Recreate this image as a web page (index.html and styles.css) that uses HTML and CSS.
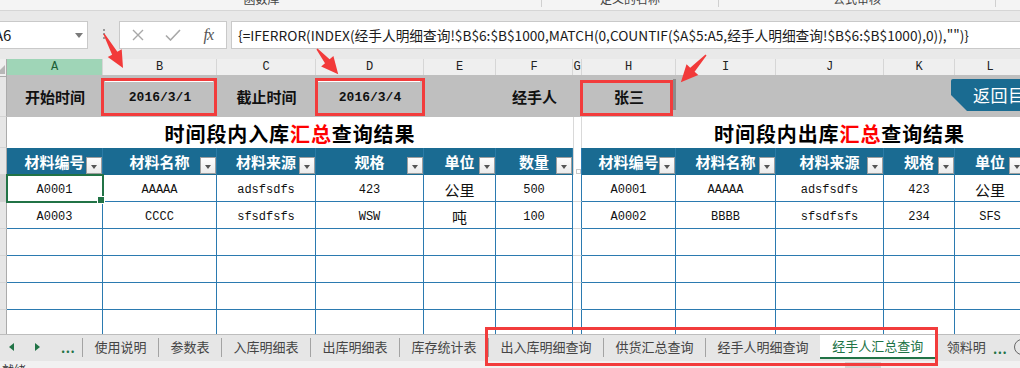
FILE: index.html
```html
<!DOCTYPE html>
<html lang="zh-CN">
<head>
<meta charset="utf-8">
<title>经手人汇总查询</title>
<link rel="stylesheet" href="styles.css">
</head>
<body>
<div class="app">
  <div class="ribbon">
    <div class="grp g1"><span>函数库</span></div>
    <div class="grp g2"><span>定义的名称</span></div>
    <div class="grp g3"><span>公式审核</span></div>
    <div class="grp g4"></div>
  </div>

  <div class="fbar">
    <div class="namebox"><span class="nb-text">A6</span><span class="nb-drop"></span></div>
    <div class="dots"><i></i><i></i><i></i></div>
    <div class="fbtns">
      <span class="fbtn"><svg width="12" height="12" viewBox="0 0 12 12"><path d="M1 1L11 11M11 1L1 11" stroke="#a8a8a8" stroke-width="1.4" fill="none"/></svg></span>
      <span class="fbtn"><svg width="16" height="12" viewBox="0 0 16 12"><path d="M1 6.5L5.5 11L15 1" stroke="#a8a8a8" stroke-width="1.6" fill="none"/></svg></span>
      <span class="fbtn fx">fx</span>
    </div>
    <div class="formula">{=IFERROR(INDEX(经手人明细查询!$B$6:$B$1000,MATCH(0,COUNTIF($A$5:A5,经手人明细查询!$B$6:$B$1000),0)),"")}</div>
  </div>

  <div class="sheet">
    <div class="row colhdr">
      <div class="rh corner"></div>
      <div class="ch sel">A</div><div class="ch">B</div><div class="ch">C</div><div class="ch">D</div><div class="ch">E</div><div class="ch">F</div><div class="ch">G</div><div class="ch">H</div><div class="ch">I</div><div class="ch">J</div><div class="ch">K</div><div class="ch">L</div><div class="ch">M</div>
    </div>

    <div class="row params">
      <div class="rh"></div>
      <div class="pc">开始时间</div>
      <div class="pc pv pb"><span class="date">2016/3/1</span></div>
      <div class="pc">截止时间</div>
      <div class="pc pv pd"><span class="date">2016/3/4</span></div>
      <div class="pc"></div>
      <div class="pc">经手人</div>
      <div class="pc pg"></div>
      <div class="pc pv ph">张三</div>
      <div class="pc"></div><div class="pc"></div><div class="pc"></div><div class="pc"></div><div class="pc"></div>
    </div>

    <div class="row titles">
      <div class="rh"></div>
      <div class="title tl">时间段内入库<span class="hl">汇总</span>查询结果</div>
      <div class="tg"></div>
      <div class="title tr">时间段内出库<span class="hl">汇总</span>查询结果</div>
    </div>

    <div class="row heads">
      <div class="rh"></div>
      <div class="hc">材料编号<span class="fb"></span></div>
      <div class="hc">材料名称<span class="fb"></span></div>
      <div class="hc">材料来源<span class="fb"></span></div>
      <div class="hc">规格<span class="fb"></span></div>
      <div class="hc">单位<span class="fb"></span></div>
      <div class="hc">数量<span class="fb"></span></div>
      <div class="hg"><span class="tiny"></span></div>
      <div class="hc">材料编号<span class="fb"></span></div>
      <div class="hc">材料名称<span class="fb"></span></div>
      <div class="hc">材料来源<span class="fb"></span></div>
      <div class="hc">规格<span class="fb"></span></div>
      <div class="hc">单位<span class="fb"></span></div>
      <div class="hc">数量<span class="fb"></span></div>
    </div>

    <div class="row data">
      <div class="rh on"></div>
      <div class="dc sel">A0001</div><div class="dc">AAAAA</div><div class="dc">adsfsdfs</div><div class="dc">423</div><div class="dc cj">公里</div><div class="dc">500</div>
      <div class="dg"></div>
      <div class="dc">A0001</div><div class="dc">AAAAA</div><div class="dc">adsfsdfs</div><div class="dc">423</div><div class="dc cj">公里</div><div class="dc"></div>
    </div>
    <div class="row data">
      <div class="rh"></div>
      <div class="dc">A0003</div><div class="dc">CCCC</div><div class="dc">sfsdfsfs</div><div class="dc">WSW</div><div class="dc cj">吨</div><div class="dc">100</div>
      <div class="dg"></div>
      <div class="dc">A0002</div><div class="dc">BBBB</div><div class="dc">sfsdfsfs</div><div class="dc">234</div><div class="dc">SFS</div><div class="dc"></div>
    </div>
    <div class="row data">
      <div class="rh"></div>
      <div class="dc"></div><div class="dc"></div><div class="dc"></div><div class="dc"></div><div class="dc"></div><div class="dc"></div>
      <div class="dg"></div>
      <div class="dc"></div><div class="dc"></div><div class="dc"></div><div class="dc"></div><div class="dc"></div><div class="dc"></div>
    </div>
    <div class="row data">
      <div class="rh"></div>
      <div class="dc"></div><div class="dc"></div><div class="dc"></div><div class="dc"></div><div class="dc"></div><div class="dc"></div>
      <div class="dg"></div>
      <div class="dc"></div><div class="dc"></div><div class="dc"></div><div class="dc"></div><div class="dc"></div><div class="dc"></div>
    </div>
    <div class="row data">
      <div class="rh"></div>
      <div class="dc"></div><div class="dc"></div><div class="dc"></div><div class="dc"></div><div class="dc"></div><div class="dc"></div>
      <div class="dg"></div>
      <div class="dc"></div><div class="dc"></div><div class="dc"></div><div class="dc"></div><div class="dc"></div><div class="dc"></div>
    </div>
    <div class="row data">
      <div class="rh"></div>
      <div class="dc"></div><div class="dc"></div><div class="dc"></div><div class="dc"></div><div class="dc"></div><div class="dc"></div>
      <div class="dg"></div>
      <div class="dc"></div><div class="dc"></div><div class="dc"></div><div class="dc"></div><div class="dc"></div><div class="dc"></div>
    </div>
  </div>

  <div class="tabs">
    <div class="nav"><span class="tri-l"></span><span class="tri-r"></span><span class="more">...</span></div>
    <div class="strip">
      <span class="sep"></span><span class="tab">使用说明</span>
      <span class="sep"></span><span class="tab">参数表</span>
      <span class="sep"></span><span class="tab">入库明细表</span>
      <span class="sep"></span><span class="tab">出库明细表</span>
      <span class="sep"></span><span class="tab">库存统计表</span>
      <span class="sep"></span><span class="tab">出入库明细查询</span>
      <span class="sep"></span><span class="tab">供货汇总查询</span>
      <span class="sep"></span><span class="tab">经手人明细查询</span>
      <span class="tab on">经手人汇总查询</span>
      <span class="tab last">领料明</span>
    </div>
    <span class="more more2">...</span>
    <span class="addsheet"></span>
  </div>

  <div class="status">
    <span class="st-text">就绪</span>
    <span class="st-view"></span>
  </div>

  <div class="back">返回目录</div>
  <div class="tabmark"></div>

  <svg class="arrows" width="1020" height="368" viewBox="0 0 1020 368">
    <polygon transform="translate(104,34) rotate(60.8)" points="0,-0.7 22,-3 22,-8 39,0 22,8 22,3 0,0.7" fill="#f23a3a"/>
    <polygon transform="translate(317,49) rotate(50)" points="0,-0.7 16,-3 16,-8 33,0 16,8 16,3 0,0.7" fill="#f23a3a"/>
    <polygon transform="translate(706,55) rotate(132.8)" points="0,-0.7 20,-3 20,-8 37,0 20,8 20,3 0,0.7" fill="#f23a3a"/>
  </svg>
</div>
</body>
</html>
```

FILE: styles.css
```css
* { box-sizing: border-box; margin: 0; padding: 0; }
html, body { width: 1020px; height: 368px; overflow: hidden; background: #e9e9e9; }
body { font-family: "Noto Sans CJK SC", "Noto Sans", sans-serif; }

.app {
  width: 1020px; height: 368px; overflow: hidden; position: relative;
  display: flex; flex-direction: column;
}

/* ribbon remnant */
.ribbon {
  height: 11px; flex: none; display: flex; overflow: hidden;
  background: #f4f4f4; border-bottom: 1px solid #d6d6d6;
}
.grp { height: 7px; overflow: hidden; border-right: 1px solid #d0d0d0; flex: none; }
.grp span { display: block; text-align: center; font-size: 12px; line-height: 14px; margin-top: -8px; color: #444; }
.g1 { width: 542px; padding-right: 18px; }
.g2 { width: 177px; }
.g3 { width: 277px; }
.g4 { flex: 1; border-right: none; }

/* formula bar */
.fbar {
  height: 48px; flex: none; display: flex; padding: 10px 0;
  background: #e9e9e9;
}
.namebox {
  width: 89px; margin-left: -1px; flex: none; background: #fff;
  border: 1px solid #c9c9c9; display: flex; align-items: center; position: relative; overflow: hidden;
}
.nb-text { font-size: 15px; color: #222; margin-left: -6px; line-height: 26px; }
.nb-drop {
  position: absolute; left: 75px; top: 11px;
  border-left: 4px solid transparent; border-right: 4px solid transparent; border-top: 5px solid #7a7a7a;
}
.dots { width: 31px; flex: none; display: flex; flex-direction: column; align-items: center; padding-top: 8px; gap: 2px; }
.dots i { display: block; width: 2px; height: 2px; background: #9a9a9a; }
.fbtns {
  width: 108px; flex: none; background: #fff; border: 1px solid #c9c9c9;
  display: flex; align-items: center;
}
.fbtn { width: 36px; display: flex; justify-content: center; align-items: center; height: 100%; }
.fx { font-family: "Liberation Serif", serif; font-style: italic; font-size: 16px; color: #555; letter-spacing: -1px; }
.formula {
  width: 800px; flex: none; margin-left: 4px; background: #fff; border: 1px solid #c9c9c9;
  padding-left: 6px; font-size: 13.7px; line-height: 26px; color: #1a1a1a; white-space: nowrap; overflow: hidden;
}

/* sheet */
.sheet { height: 275px; flex: none; overflow: hidden; background: #fff; position: relative; }
.row {
  display: grid; width: 1098px;
  grid-template-columns: 7px 96px 114px 99px 108px 72px 77px 9px 94px 100px 108px 71px 71px 71px;
}
.rh { background: #e6e6e6; border-right: 1px solid #ababab; border-bottom: 1px solid #d4d4d4; }
.rh.on { background: #d2d2d2; }

.colhdr { height: 16px; background: #efefef; }
.corner { position: relative; background: #efefef; border-bottom: 1px solid #ababab; }
.corner::after {
  content: ""; position: absolute; right: 1px; bottom: 2px;
  border-left: 9px solid transparent; border-bottom: 9px solid #b7b7b7;
}
.ch {
  border-right: 1px solid #d6d6d6; border-bottom: 1px solid #ababab;
  font-family: "Liberation Mono", monospace; font-size: 12px; line-height: 16px;
  text-align: center; color: #222;
}
.ch.sel { background: #9fd5b7; border-bottom: 2px solid #217346; color: #1c5e36; }

.params { height: 42px; }
.pc {
  background: #bfbfbf; display: flex; align-items: center; justify-content: center;
  font-size: 15px; font-weight: 700; color: #111;
}
.pv { position: relative; }
.pv::after { content: ""; position: absolute; border: 3px solid #f23c3c; }
.pv::before { content: ""; position: absolute; }
.pb::after { left: -2px; right: 0; top: 3px; height: 32px; }
.pd::after { left: -1px; right: -1px; top: 3px; height: 32px; }
.pb::before, .pd::before { left: 2px; right: 4px; top: 6px; height: 1px; background: #fff; }
.ph::after { left: -2px; right: 3px; top: 5px; height: 30px; }
.ph::before { right: 0; top: 4px; width: 3px; height: 31px; background: #8c8c8c; }
.date { font-family: "Liberation Mono", monospace; font-size: 13px; font-weight: 700; padding-top: 2px; }

.titles { height: 31px; }
.title {
  display: flex; align-items: center; justify-content: center;
  font-size: 20px; font-weight: 700; letter-spacing: 0.9px; color: #000; padding-top: 2px;
}
.tl { grid-column: 2 / 8; }
.tr { grid-column: 9 / 15; }
.tg { border-left: 1px solid #d9d9d9; border-right: 1px solid #d9d9d9; }
.hl { color: #ff0000; }

.heads { height: 27px; }
.hc {
  position: relative; background: #1a6b92; color: #fff; font-size: 15px; font-weight: 700;
  display: flex; align-items: center; justify-content: center; border-right: 1px solid #2b7ba6;
}
.hg { background: #fff; border-left: 1px solid #d6d6d6; border-right: 1px solid #2b7ab0; position: relative; }
.tiny { position: absolute; left: 2px; bottom: 1px; width: 5px; height: 5px; border: 1px solid #c8c8c8; background: #fff; }
.fb {
  position: absolute; right: 0; bottom: 1px; width: 16px; height: 17px;
  background: linear-gradient(#fefefe, #ebebeb); border: 1px solid #9e9e9e;
}
.fb::after {
  content: ""; position: absolute; left: 4px; top: 7px;
  border-left: 3.5px solid transparent; border-right: 3.5px solid transparent; border-top: 4px solid #555;
}

.data { height: 27px; }
.dc {
  border-right: 1px solid #2b7ab0; border-bottom: 1px solid #2b7ab0;
  display: flex; align-items: center; justify-content: center; padding-top: 3px;
  font-family: "Liberation Mono", monospace; font-size: 12px; color: #111;
}
.dc.cj { font-family: "Noto Sans CJK SC", sans-serif; font-size: 15px; padding-top: 2px; }
.dg { border-right: 1px solid #2b7ab0; border-bottom: 1px solid #d9d9d9; }
.dc.sel { position: relative; z-index: 2; }
.dc.sel::after {
  content: ""; position: absolute; left: -1px; top: -1px; right: -2px; bottom: -2px;
  border: 2px solid #217346;
}
.dc.sel::before {
  content: ""; position: absolute; right: -3px; bottom: -3px; width: 6px; height: 6px;
  background: #217346; border: 1px solid #fff; z-index: 3;
}

/* sheet tabs */
.tabs {
  height: 27px; flex: none; display: flex; align-items: flex-start;
  background: #e6e6e6; border-top: 1px solid #bdbdbd; font-size: 13px; color: #444;
}
.nav { width: 82px; flex: none; height: 24px; display: flex; align-items: center; }
.tri-l {
  margin-left: 9px; width: 0; height: 0;
  border-top: 4px solid transparent; border-bottom: 4px solid transparent; border-right: 5px solid #217346;
}
.tri-r {
  margin-left: 21px; width: 0; height: 0;
  border-top: 4px solid transparent; border-bottom: 4px solid transparent; border-left: 5px solid #217346;
}
.more { margin-left: 21px; color: #217346; font-weight: 700; font-size: 13px; line-height: 24px; padding-top: 2px; letter-spacing: 0.5px; }
.strip { width: 906px; flex: none; display: flex; align-items: flex-start; overflow: hidden; white-space: nowrap; }
.sep { width: 1px; height: 19px; margin-top: 3px; background: #a3a3a3; flex: none; }
.tab { flex: none; height: 24px; line-height: 23px; padding: 0 11.5px; }
.tab.on { background: #fff; color: #217346; border-bottom: 2px solid #217346; line-height: 22px; padding: 0 12px; }
.tab.last { padding-right: 0; }
.more2 { margin-left: 5px; }
.addsheet {
  margin-left: 7px; margin-top: 4px; width: 16px; height: 16px; flex: none;
  border: 1px solid #666; border-radius: 50%;
}

.status { flex: 1; background: #f1f1f1; position: relative; overflow: hidden; }
.st-text { position: absolute; left: 2px; top: 2px; font-size: 12px; line-height: 14px; color: #333; }
.st-view { position: absolute; left: 845px; top: 1px; width: 36px; height: 10px; background: #d4d4d4; }

/* overlays */
.back {
  position: absolute; left: 951px; top: 79px; width: 100px; height: 32px;
  background: #1a6b91; color: #fff; font-size: 17px; line-height: 32px; padding-left: 22px;
  clip-path: polygon(0 0, 100% 0, 100% 100%, 16px 100%, 0 50%);
  border-top-left-radius: 2px; letter-spacing: 0.5px;
}
.tabmark {
  position: absolute; left: 485px; top: 327px; width: 453px; height: 39px;
  border: 3px solid #f23c3c; z-index: 10;
}
.arrows { position: absolute; left: 0; top: 0; pointer-events: none; z-index: 11; }
```
